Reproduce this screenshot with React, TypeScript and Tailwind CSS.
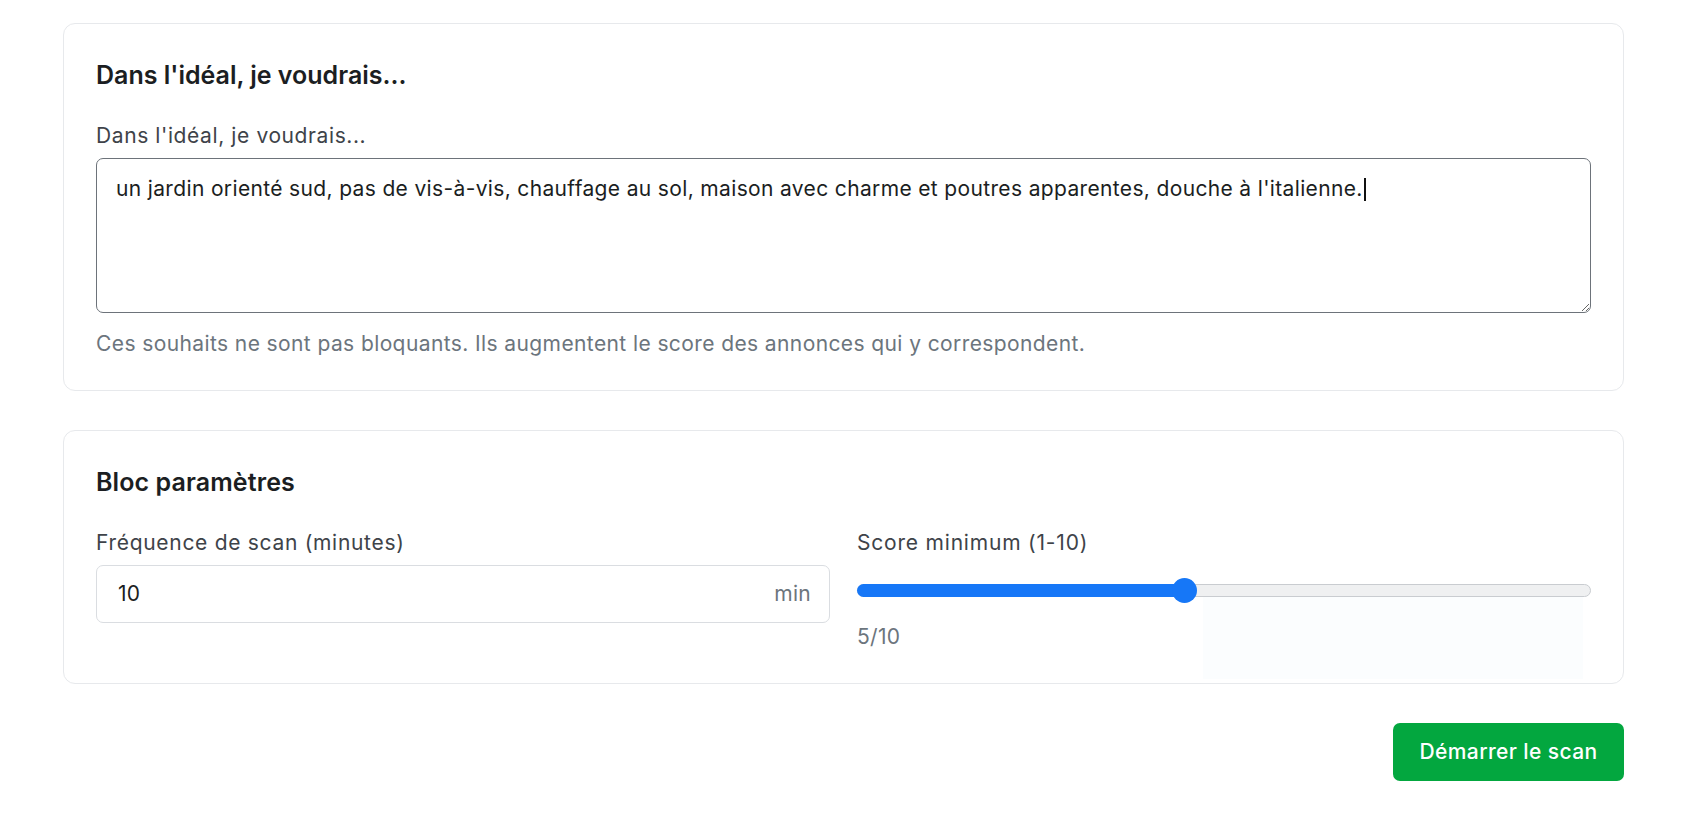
import React from "react";

const text =
  "un jardin orienté sud, pas de vis-à-vis, chauffage au sol, maison avec charme et poutres apparentes, douche à l'italienne.";

export default function App() {
  return (
    <div
      className="min-h-[814px] w-full bg-white pl-[63px] pr-[58px] pt-[23px]"
      style={{ fontFamily: "Inter, 'Noto Sans', sans-serif" }}
    >
      {/* Card 1 */}
      <div className="rounded-[12px] border border-[#e7e9ec] px-[32px] pb-[32px] pt-[37px]">
        <h2 className="text-[25px] font-semibold leading-[29px] text-[#1b1e22]">
          Dans l'idéal, je voudrais...
        </h2>
        <label className="mt-[31px] block text-[21px] leading-[29px] tracking-[0.6px] text-[#3e4349]">
          Dans l'idéal, je voudrais...
        </label>
        <div className="relative mt-[8px]">
          <textarea
            defaultValue={text}
            className="block h-[155px] w-full resize-y rounded-[7px] border border-[#6d737a] bg-white px-[19px] py-[15px] text-[21px] leading-[29px] tracking-[0.35px] text-[#1b1e22] outline-none"
          />
          <div className="pointer-events-none absolute inset-0 px-[20px] py-[16px] text-[21px] leading-[29px] tracking-[0.35px] text-transparent">
            {text}
            <span className="ml-[1px] inline-block h-[23px] w-[2px] translate-y-[4px] bg-[#111]" />
          </div>
        </div>
        <p className="mt-[16px] text-[21px] leading-[29px] tracking-[0.4px] text-[#6c757d]">
          Ces souhaits ne sont pas bloquants. Ils augmentent le score des annonces qui y correspondent.
        </p>
      </div>

      {/* Card 2 */}
      <div className="relative mt-[39px] rounded-[12px] border border-[#e7e9ec] px-[32px] pb-[32px] pt-[37px]">
        <div className="pointer-events-none absolute left-[1139px] top-[165px] h-[83px] w-[380px] bg-[#fbfdfe]" />
        <h2 className="relative text-[25px] font-semibold leading-[29px] tracking-[0.1px] text-[#1b1e22]">
          Bloc paramètres
        </h2>
        <div className="relative mt-[31px] grid grid-cols-2 gap-[27px]">
          <div>
            <label className="block text-[21px] leading-[29px] tracking-[0.7px] text-[#3e4349]">
              Fréquence de scan (minutes)
            </label>
            <div className="mt-[8px] flex h-[58px] items-center rounded-[7px] border border-[#dadde1] bg-white pl-[21px] pr-[18px]">
              <span className="flex-1 text-[21px] tracking-[0.3px] text-[#1b1e22]">10</span>
              <span className="text-[21px] tracking-[0.3px] text-[#6c757d]">min</span>
            </div>
          </div>
          <div>
            <label className="block text-[21px] leading-[29px] tracking-[0.8px] text-[#3e4349]">
              Score minimum (1-10)
            </label>
            <div className="relative mt-[21px] h-[25px]">
              <div className="absolute left-0 right-0 top-[6px] h-[13px] rounded-full border border-[#c9ccd0] bg-[#eff0f1]" />
              <div className="absolute left-0 top-[6px] h-[13px] w-[330px] rounded-full bg-[#1677f7]" />
              <div className="absolute left-[315px] top-0 h-[25px] w-[25px] rounded-full bg-[#1677f7]" />
            </div>
            <div className="mt-[19px] text-[21px] leading-[29px] tracking-[0.3px] text-[#6c757d]">5/10</div>
          </div>
        </div>
      </div>

      {/* Button */}
      <div className="mt-[39px] flex justify-end">
        <button className="h-[58px] w-[231px] rounded-[7px] bg-[#03a73f] text-[21px] font-medium tracking-[0.4px] text-white">
          Démarrer le scan
        </button>
      </div>
    </div>
  );
}
